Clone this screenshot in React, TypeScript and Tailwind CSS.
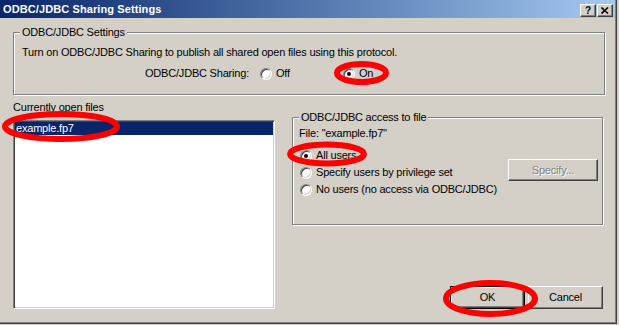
import React from "react";

const Radio = ({ checked }: { checked?: boolean }) => (
  <span className="flex h-[12px] w-[12px] shrink-0 items-center justify-center rounded-full border border-t-[#808080] border-l-[#808080] border-r-white border-b-white bg-white shadow-[inset_1px_1px_0_#404040,inset_-1px_-1px_0_#d4d0c8]">
    {checked && <span className="h-[4px] w-[4px] rounded-full bg-black" />}
  </span>
);

const RadioOption = ({ label, checked }: { label: string; checked?: boolean }) => (
  <div className="flex h-[13px] items-center gap-[4px]">
    <Radio checked={checked} />
    <span className="leading-[13px]">{label}</span>
  </div>
);

const raised =
  "border border-t-white border-l-white border-r-[#404040] border-b-[#404040] shadow-[inset_-1px_-1px_0_#808080] bg-[#d4d0c8]";

const Group = ({
  title,
  className,
  children,
}: {
  title: string;
  className: string;
  children: React.ReactNode;
}) => (
  <div className={"relative border border-[#808080] shadow-[inset_1px_1px_0_#fff,1px_1px_0_#fff] " + className}>
    <span className="absolute -top-[7px] left-[6px] bg-[#d4d0c8] px-[2px] leading-[13px]">{title}</span>
    {children}
  </div>
);

const App = () => {
  return (
    <div className="relative h-[325px] w-[619px] overflow-hidden bg-[#d4d0c8] font-['Liberation_Sans',Arial,sans-serif] text-[11px] text-black">
      <div className="h-[324px] w-[617px] border-r border-b border-[#404040] shadow-[inset_-1px_-1px_0_#808080]">
        {/* title bar */}
        <div className="flex h-[18px] w-[615px] items-center justify-between bg-gradient-to-r from-[#0a246a] to-[#a6caf0] pl-[3px] pr-[2px]">
          <span className="font-bold text-white leading-[13px] tracking-[0.1px]">ODBC/JDBC Sharing Settings</span>
          <div className="mb-[1px] flex gap-[1px] self-end">
            <div className={"flex h-[13px] w-[16px] items-center justify-center text-[10px] font-bold leading-none " + raised}>
              ?
            </div>
            <div className={"flex h-[13px] w-[16px] items-center justify-center " + raised}>
              <svg width="8" height="7" viewBox="0 0 8 7">
                <path d="M0.5 0.5 L7 6.5 M7 0.5 L0.5 6.5" stroke="#000" strokeWidth="1.6" />
              </svg>
            </div>
          </div>
        </div>

        <div className="px-[13px] tracking-[-0.2px]">
          <Group title="ODBC/JDBC Settings" className="mt-[14px] h-[63px] w-[592px]">
            <div className="pl-[8px] pt-[13px]">
              <div className="leading-[13px]">
                Turn on ODBC/JDBC Sharing to publish all shared open files using this protocol.
              </div>
              <div className="mt-[8px] flex h-[13px] items-center">
                <span className="w-[115px] pl-[123px] box-content leading-[13px]">ODBC/JDBC Sharing:</span>
                <div className="w-[83px]">
                  <RadioOption label="Off" />
                </div>
                <RadioOption label="On" checked />
              </div>
            </div>
          </Group>

          <div className="mt-[6px] flex">
            <div className="w-[263px]">
              <div className="h-[13px] leading-[13px]">Currently open files</div>
              <div className="mt-[6px] h-[189px] border border-t-[#808080] border-l-[#808080] border-r-white border-b-white bg-white p-[1px] shadow-[inset_1px_1px_0_#404040,inset_-1px_-1px_0_#d4d0c8]">
                <div className="h-[13px] bg-[#0a246a] pl-[1px] leading-[13px] text-white">example.fp7</div>
              </div>
            </div>

            <div className="ml-[17px] flex w-[312px] flex-col">
              <Group title="ODBC/JDBC access to file" className="mt-[16px] h-[108px] w-[311px]">
                <div className="pl-[6px] pr-[4px] pt-[9px]">
                  <div className="leading-[13px]">File: "example.fp7"</div>
                  <div className="mt-[9px] flex justify-between">
                    <div className="flex flex-col gap-[4px] pl-[1px]">
                      <RadioOption label="All users" checked />
                      <RadioOption label="Specify users by privilege set" />
                      <RadioOption label="No users (no access via ODBC/JDBC)" />
                    </div>
                    <div className={"mt-[10px] flex h-[22px] w-[90px] items-center justify-center text-[#808080] [text-shadow:1px_1px_0_#fff] " + raised}>
                      Specify...
                    </div>
                  </div>
                </div>
              </Group>

              <div className="mt-auto flex justify-end gap-[3px]">
                <div className="flex h-[23px] w-[75px] items-center justify-center border border-black bg-[#d4d0c8] shadow-[inset_1px_1px_0_#fff,inset_-1px_-1px_0_#404040,inset_-2px_-2px_0_#808080]">
                  OK
                </div>
                <div className={"flex h-[23px] w-[75px] items-center justify-center " + raised}>Cancel</div>
              </div>
            </div>
          </div>
        </div>
      </div>

      {/* red annotation marks */}
      <svg className="pointer-events-none absolute left-0 top-0" width="619" height="325">
        <g fill="none" stroke="#ff0000" strokeWidth="6">
          <ellipse cx="361.5" cy="73" rx="24.5" ry="9" />
          <ellipse cx="61" cy="126.5" rx="56" ry="12.5" />
          <ellipse cx="327" cy="154" rx="37" ry="9.5" />
          <ellipse cx="490.5" cy="298.5" rx="44.5" ry="15.5" />
        </g>
      </svg>
    </div>
  );
};

export default App;
